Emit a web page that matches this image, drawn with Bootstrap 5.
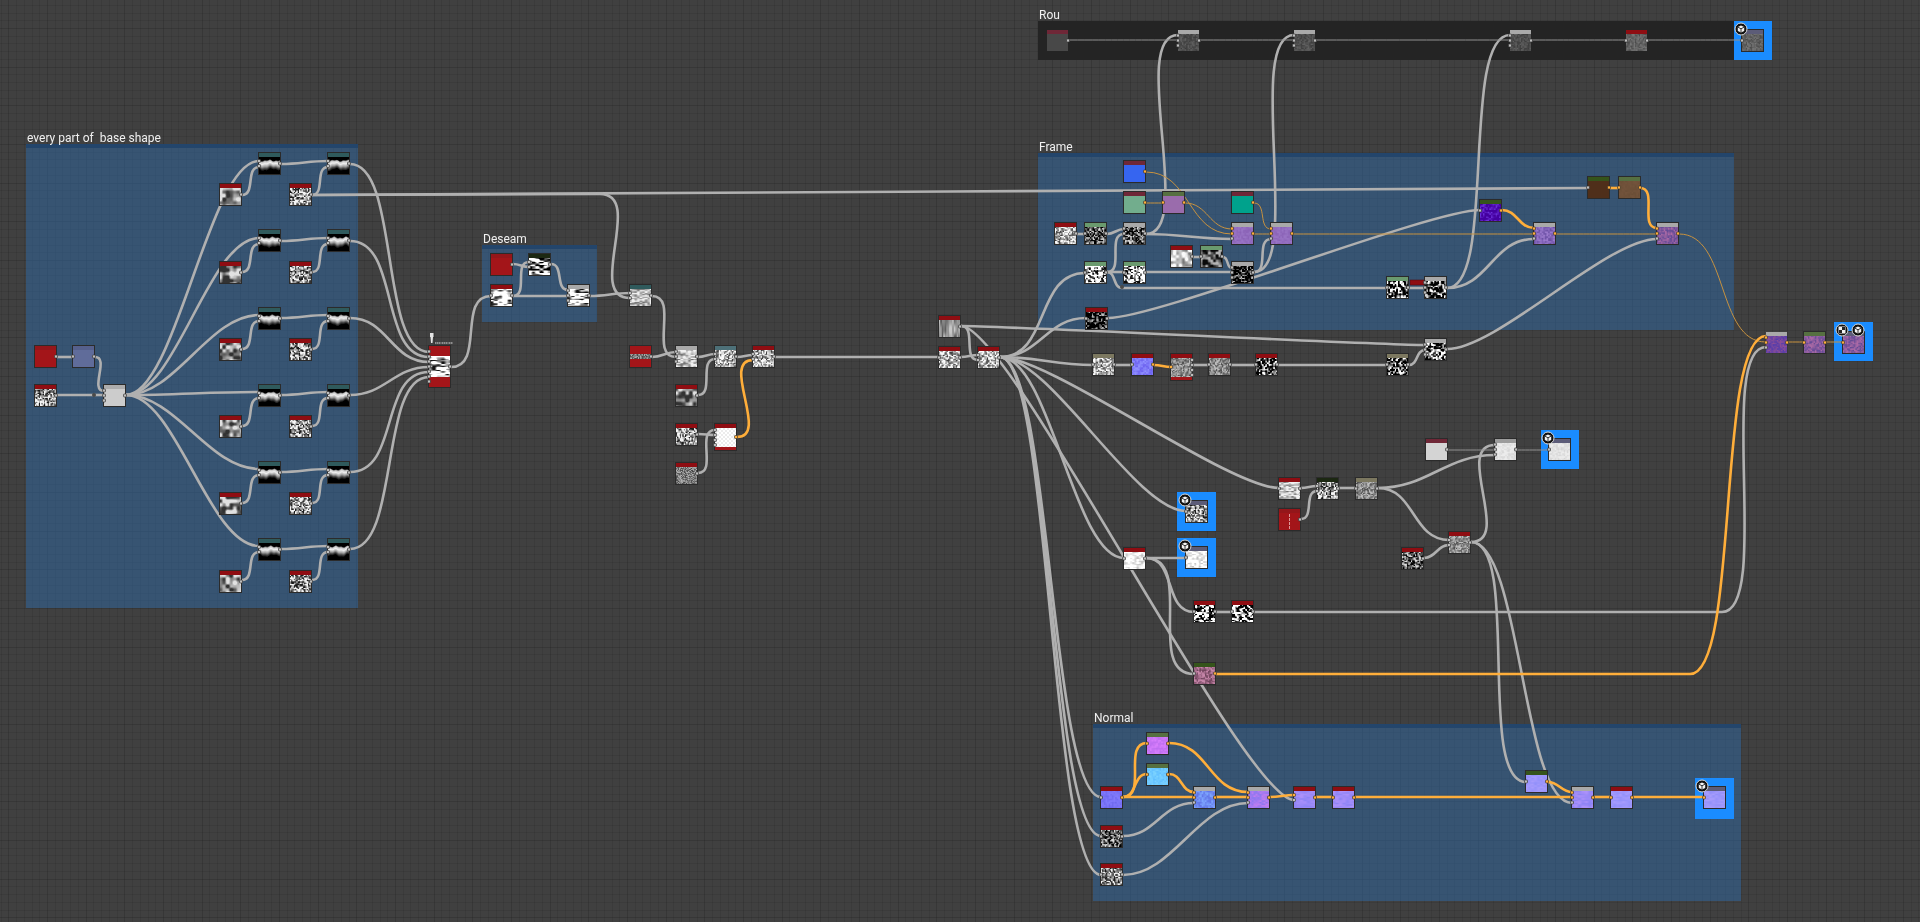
<!DOCTYPE html>
<html lang="en">
<head>
<meta charset="utf-8">
<meta name="viewport" content="width=device-width, initial-scale=1">
<title>Material graph</title>
<link href="https://cdn.jsdelivr.net/npm/bootstrap@5.3.0/dist/css/bootstrap.min.css" rel="stylesheet">
<style>
  body { background: #404040; font-family: Roboto, "Noto Sans", sans-serif; }
  .graph-layer { top: 0; left: 0; pointer-events: none; }
  .graph-frame { background: rgba(47, 100, 155, .55); border-top: 4px solid #23456b; background-clip: padding-box; }
  .graph-frame.dark { background: #242424; border-top: 0; }
  .frame-title { color: #f0f0f0; font-size: 12px; line-height: 16px; white-space: pre; }
  .output-halo { background: #1a8cff; }
  .graph-node { background: #2b2b2b; padding: 1px; }
  .graph-node.plain { background: transparent; }
  .graph-node canvas { display: block; }
</style>
</head>
<body>
<main id="stage" class="position-relative overflow-hidden min-vh-100 w-100">
  <canvas id="grid" class="position-absolute graph-layer"></canvas>
  <div id="frames"></div>
  <svg id="wires" class="position-absolute graph-layer w-100 h-100" fill="none" aria-hidden="true"></svg>
  <div id="nodes"></div>
  <svg id="overlay" class="position-absolute graph-layer w-100 h-100" aria-hidden="true">
    <defs>
      <g id="view3d">
        <circle r="6" fill="#111" stroke="#d8d8d8" stroke-width="1"/>
        <path d="M0-3.600 3.200-1.900V1.900L0 3.600-3.200 1.900V-1.900Z" fill="#f2f2f2"/>
        <path d="M-3.200-1.900 0-.2 3.200-1.900M0-.2V3.600" stroke="#222" stroke-width=".9" fill="none"/>
      </g>
      <g id="view2d">
        <circle r="6" fill="#111" stroke="#d8d8d8" stroke-width="1"/>
        <path d="M-3.500-3.500H3.500V3.500H-3.500Z" fill="#f2f2f2"/>
        <path d="M0-3H3V0H0ZM-3 0H0V3H-3Z" fill="#222"/>
      </g>
    </defs>
  </svg>
</main>
<script src="https://cdn.jsdelivr.net/npm/bootstrap@5.3.0/dist/js/bootstrap.bundle.min.js"></script>
<script>
const SVG = 'http://www.w3.org/2000/svg';
const $ = id => document.getElementById(id);
const RED = '#8f0d12', MAR = '#6f2737', GRY = '#a9a9a9', TEAL = '#2f5a5c', GRN = '#6a9a6e', OLV = '#567041',
      DGR = '#35541b', KHA = '#7c7860', SLT = '#5c5c78', BLG = '#4d7078', BLK = '#1c2812';

/* frames: x, y, width, height, title, dark */
const frames = [
  [26, 144, 332, 464, 'every part of  base shape'],
  [482, 245, 115, 77, 'Deseam'],
  [1038, 153, 696, 177, 'Frame'],
  [1038, 21, 696, 39, 'Rou', true],
  [1093, 724, 648, 177, 'Normal']
];
const halos = [[1734,21,38,39],[1177,492,39,39],[1177,538,39,39],[1541,430,38,39],[1695,778,39,41],[1834,322,39,39]];

/* textures: cell width, cell height, low colour, high colour, contrast, bias */
const K = [0,0,0], W = [255,255,255];
const T = {
  blob: [3.6,3.6,[50,50,50],[225,225,225],1.7,.05], grain: [1.3,1.3,[25,25,25],[245,245,245],1.5,.05],
  fine: [1,1,[70,70,70],[180,180,180],1,0], noise: [1.3,1.3,[60,60,60],[250,250,250],1.4,.12],
  soft: [2.6,1.3,[110,110,110],[240,240,240],1.4,.15], streak: [4.5,1.4,[20,20,20],W,2,.32],
  streak2: [4,1.4,K,W,2.2,.05], vstreak: [1.5,9,[80,80,80],[200,200,200],1.2,.05],
  hot: [1.5,1.5,[10,10,10],W,2.6,.25], bw: [1.7,1.5,K,W,3.2,.05], bwd: [1.6,1.6,K,W,2.2,-.18],
  dark: [1.3,1.3,K,[220,220,220],1.5,-.08], darks: [1.5,1.5,K,[210,210,210],1.9,-.38],
  grey: [1.2,1.2,[80,80,80],[190,190,190],1.3,.05], cloud: [3,3,[120,120,120],[250,250,250],1.5,.15],
  cloudd: [2.6,2.6,[10,10,10],[180,180,180],1.6,-.05], rough: [1.4,1.4,[58,58,58],[98,98,98],1,0],
  rough2: [1.3,1.3,[75,75,75],[120,120,120],1.1,0], pale: [1.5,1.5,[212,212,212],[236,236,236],1.2,.1],
  pale2: [2.2,1.5,[190,190,190],W,1.5,.25], blue: [1.6,1.6,[110,100,240],[145,145,255],1.3,0],
  vio: [1.6,1.6,[108,80,165],[155,122,205],1.2,0], vio2: [1.4,1.4,[100,75,150],[170,105,165],1.3,0],
  vio3: [1.4,1.4,[85,60,170],[140,78,150],1.3,0], vioflat: [1.6,1.6,[138,98,182],[154,118,198],1,0],
  indigo: [1.6,1.6,[68,0,160],[110,50,220],1.5,-.2], brown: [1.6,1.6,[106,78,54],[116,84,60],1,0],
  mauve: [1.4,1.4,[115,70,95],[200,135,170],1.4,0], mag: [1.6,1.6,[190,110,240],[215,125,252],1.2,0],
  sky: [1.6,1.6,[95,190,255],[125,212,255],1.2,0], bluen: [1.6,1.6,[98,118,232],[125,165,255],1.3,0],
  pinkn: [2,1.6,[145,120,240],[192,125,240],1.3,0], lav: [3.5,1.5,[142,132,245],[172,145,250],1.2,0],
  lav2: [3,1.5,[146,144,250],[168,156,252],1.1,0], norm: [1.6,1.6,[110,105,238],[130,122,252],1.2,0]
};

/* nodes: x, y, header colour, texture or flat colour, options */
const nodes = [];
const add = (x, y, head, tex, o = {}) => nodes.push({x, y, head, tex, ...o});
[152,229,307,384,461,538].forEach(y => {
  add(258, y, TEAL, 'mtn', {i: [-2.5,2.5], o: [0]});
  add(327, y, TEAL, 'mtn', {i: [-2.5,2.5], o: [0]});
});
[183,261,338,415,492,570].forEach(y => { add(219, y, RED, 'blob', {o: [0]}); add(289, y, RED, 'grain', {o: [0]}); });
add(34,345,'#94161a','#a31519',{o:[0]}); add(72,345,'#56608c','#606c9a',{i:[0],o:[0]});
add(34,384,RED,'grain',{o:[0]}); add(103,384,'#adadad','#cccccc',{i:[-5,0,5],o:[0]});
add(428,345,'#a31519','streak',{h:43,head_h:10,foot:10,i:[-15,-10,-5,0,5,10,15],o:[0]});
add(490,253,'#94161a','#a31519',{o:[0]}); add(528,253,BLK,'streak2',{i:[-2.5,2.5],o:[0]});
add(490,284,RED,'streak',{i:[0],o:[0]}); add(567,284,GRY,'streak',{i:[-5,0,5],o:[0]});
add(629,284,TEAL,'soft',{i:[-2.5,2.5],o:[0]});
add(629,345,'#a31519','fine',{head_h:8,foot:8,o:[0]}); add(675,345,GRY,'soft',{i:[-5,0,5],o:[0]});
add(714,345,BLG,'noise',{i:[-2.5,2.5],o:[0]}); add(752,345,RED,'noise',{i:[-2.5,2.5],o:[0]});
add(675,384,RED,'blob',{o:[0]}); add(675,423,RED,'grain',{o:[0]}); add(675,462,RED,'fine',{o:[0]});
add(714,423,RED,'check',{h:28,foot:3,i:[-7,-2,3,8],oo:[0]});
add(938,315,RED,'vstreak',{o:[0]}); add(938,346,RED,'noise',{i:[0],o:[0]}); add(977,346,RED,'noise',{i:[-2.5,2.5],o:[0]});
add(1085,307,RED,'darks',{i:[0],o:[0]}); add(1092,353,KHA,'noise',{i:[0],o:[0]});
add(1131,353,RED,'blue',{i:[0],oo:[0]}); add(1170,353,RED,'grey',{h:28,foot:3,io:[0],o:[-7,-2,3,8]});
add(1208,353,RED,'grey',{i:[0],o:[0]}); add(1255,353,RED,'bwd',{i:[0],o:[0]}); add(1386,353,KHA,'bwd',{i:[0],o:[0]});
add(1424,338,GRY,'bwd',{i:[-5,0,5],o:[0]});
add(1123,160,MAR,'#3665f0',{oo:[0]}); add(1123,191,MAR,'#72ad8d',{oo:[0]});
add(1162,191,OLV,'#9a6cac',{io:[0],oo:[0]}); add(1231,191,MAR,'#00a28c',{oo:[0]});
add(1054,222,RED,'noise',{o:[0]}); add(1084,222,GRN,'dark',{i:[0],o:[0]}); add(1123,222,GRY,'dark',{i:[-5,0,5],o:[0]});
add(1231,222,GRY,'vioflat',{io:[-5,0],i:[5],oo:[0]}); add(1270,222,GRY,'vioflat',{io:[-5,0],i:[5],oo:[0]});
add(1170,245,RED,'cloud',{o:[0]}); add(1200,245,GRN,'cloudd',{i:[0],o:[0]}); add(1231,261,GRY,'darks',{i:[-5,0,5],o:[0]});
add(1084,261,GRN,'hot',{i:[0],o:[0]}); add(1123,261,GRN,'hot',{i:[0],o:[0]});
add(1386,276,GRN,'bwd',{i:[0],o:[0]}); add(1424,276,GRY,'bwd',{i:[-5,0,5],o:[0]});
add(1587,176,DGR,'#4f2f1a',{i:[0],oo:[0]}); add(1618,176,OLV,'brown',{io:[0],oo:[0]});
add(1479,199,DGR,'indigo',{i:[0],oo:[0]});
add(1533,222,GRY,'vio',{io:[-5,0],i:[5],oo:[0]}); add(1656,222,GRY,'vio2',{io:[-5,0],i:[5],oo:[0]});
add(1046,29,MAR,'#484848',{plain:1,o:[0]}); add(1177,29,GRY,'rough',{plain:1,i:[-5,0,5],o:[0]});
add(1293,29,GRY,'rough',{plain:1,i:[-5,0,5],o:[0]}); add(1509,29,GRY,'rough',{plain:1,i:[-5,0,5],o:[0]});
add(1625,29,RED,'rough2',{plain:1,i:[0],o:[0]}); add(1741,29,SLT,'rough2',{i:[0]});
add(1185,500,SLT,'grain',{i:[0]}); add(1185,546,SLT,'pale2',{i:[0]});
add(1123,547,RED,'pale2',{i:[0],o:[0]});
add(1278,477,RED,'soft',{i:[0],o:[0]}); add(1316,477,BLK,'grain',{i:[-2.5,2.5],o:[0]}); add(1355,477,KHA,'grey',{i:[0],o:[0]});
add(1278,508,'#94161a','#a31519',{o:[0],dash:1}); add(1401,547,RED,'dark',{o:[0]}); add(1448,531,RED,'grey',{i:[-2.5,2.5],o:[0]});
add(1425,438,MAR,'#d4d4d4',{o:[0]}); add(1494,438,'#9c9c9c','pale',{i:[-5,0,5],o:[0]}); add(1548,438,SLT,'pale',{i:[0]});
add(1193,600,RED,'bw',{i:[0],o:[0]}); add(1231,600,RED,'bw',{i:[0],o:[0]}); add(1193,662,DGR,'mauve',{i:[0],oo:[0]});
add(1100,786,RED,'norm',{i:[0],oo:[0]}); add(1146,732,OLV,'mag',{io:[0],oo:[0]}); add(1146,763,OLV,'sky',{io:[0],oo:[0]});
add(1193,786,GRY,'bluen',{io:[-5,0],i:[5],oo:[0]}); add(1247,786,GRY,'pinkn',{io:[-5,0],i:[5],oo:[0]});
add(1293,786,RED,'lav',{io:[-2.5],i:[2.5],oo:[0]}); add(1332,786,RED,'lav',{io:[0],oo:[0]});
add(1100,825,RED,'dark',{i:[0],o:[0]}); add(1100,863,RED,'grain',{i:[0],o:[0]});
add(1525,770,DGR,'lav2',{i:[0],oo:[0]}); add(1571,786,GRY,'lav',{io:[-5,0],i:[5],oo:[0]});
add(1610,786,RED,'lav2',{io:[0],oo:[0]}); add(1703,786,SLT,'lav2',{io:[0]});
add(1765,331,GRY,'vio3',{plain:1,io:[-5,0],i:[5],oo:[0]}); add(1803,331,OLV,'vio2',{io:[0],oo:[0]}); add(1842,331,SLT,'vio2',{io:[0]});

/* wires: x1, y1, x2, y2 */
const grey = [
  [57,357,73,357],[95,357,104,391],[57,395,94,395],[94,395,104,395],
  [312,195,1588,188],[312,195,600,194],[600,194,630,298],
  [451,367,491,296],[513,264,529,267],[513,296,529,262],[513,296,568,296],[551,264,568,290],[590,296,630,293],
  [652,296,676,357],[652,357,676,352],[698,357,715,354],[698,395,715,359],[698,434,715,435],[698,473,715,430],
  [737,357,753,355],[775,357,939,357],[961,357,978,355],[961,326,978,360],[961,326,1425,345],
  [1000,357,1085,273],[1000,357,1086,318],[1000,357,1093,365],[1000,357,1279,488],[1000,357,1186,511],[1000,357,1124,558],
  [1000,357,1101,797],[1000,357,1101,836],[1000,357,1101,875],[961,326,1294,800],
  [1115,365,1132,365],[1193,365,1209,365],[1231,365,1256,365],[1278,365,1387,365],[1409,365,1425,350],[1447,349,1657,239],
  [1077,234,1085,234],[1107,234,1124,229],[1107,272,1124,234],[1107,272,1124,272],[1107,272,1122,288],[1122,288,1387,288],
  [1146,234,1232,239],[1146,234,1178,35],[1146,272,1232,272],[1193,257,1201,257],[1223,257,1232,268],
  [1254,272,1271,239],[1254,272,1294,35],[1108,318,1480,210],[1409,288,1425,288],[1447,288,1534,239],[1447,288,1510,35],
  [1146,558,1186,558],[1146,558,1194,612],[1146,558,1194,674],[1216,612,1232,612],[1254,612,1722,612],[1722,612,1766,347],
  [1301,488,1317,486],[1301,519,1317,491],[1339,488,1356,488],[1378,488,1495,455],[1378,488,1449,540],[1424,558,1449,545],
  [1471,542,1495,445],[1471,542,1526,782],[1471,542,1572,803],[1123,836,1194,803],[1123,875,1248,803]
];
[164,241,318,395,472,549].forEach((y, k) => {
  grey.push([126,395,259,y-3],[281,y,328,y-3],[242,y+31,259,y+3],[350,y,429,352+k*5]);
  grey.push([312,y+31,328,y+3]);
});
const greyThin = [[1069,40,1178,40],[1200,40,1294,40],[1316,40,1510,40],[1532,40,1626,40],[1648,40,1742,40],[1447,450,1495,450],[1517,450,1549,450]];
const gold = [[737,437,753,360],[1154,365,1171,367],[1610,188,1619,188],[1640,188,1657,228],[1502,210,1534,228],
  [1216,674,1690,674],[1690,674,1766,336],[1123,797,1147,743],[1123,797,1147,774],[1123,797,1194,797],[1169,774,1194,792],
  [1169,743,1248,792],[1216,797,1248,797],[1270,797,1294,795],[1316,797,1333,797],[1355,797,1572,797],[1548,782,1572,792],
  [1594,797,1611,797],[1633,797,1704,797]];
const goldThin = [[1146,172,1232,234],[1146,203,1163,203],[1185,203,1232,229],[1254,203,1271,229],[1254,234,1271,234],
  [1293,234,1534,234],[1556,234,1657,234],[1679,234,1766,342],[1788,342,1804,342],[1826,342,1843,342]];

const el = (parent, name, attrs) => {
  const e = document.createElementNS(SVG, name);
  for (const k in attrs) e.setAttribute(k, attrs[k]);
  parent.appendChild(e);
  return e;
};
const box = (parent, tag, cls, x, y, w, h) => {
  const e = document.createElement(tag);
  e.className = cls;
  e.style.cssText = `left:${x}px;top:${y}px;` + (w ? `width:${w}px;` : '') + (h ? `height:${h}px` : '');
  parent.appendChild(e);
  return e;
};
const wire = ([x1, y1, x2, y2], colour, width) => {
  const c = Math.min(50, .42 * Math.hypot(x2 - x1, y2 - y1));
  el($('wires'), 'path', {d: `M${x1} ${y1}C${x1+c} ${y1} ${x2-c} ${y2} ${x2} ${y2}`, stroke: colour, 'stroke-width': width});
};

let seed = 7;
const rnd = () => (seed = (seed * 16807) % 2147483647) / 2147483647;
function paint(g, w, h, n) {
  const top = n.head_h || 4, foot = n.foot || 0;
  g.fillStyle = n.head; g.fillRect(0, 0, w, h);
  if (foot) { g.fillStyle = '#a31519'; g.fillRect(0, h - foot, w, foot); }
  const th = h - top - foot;
  if (n.tex[0] === '#') {
    g.fillStyle = n.tex; g.fillRect(0, top, w, th);
    if (n.dash) { g.fillStyle = '#d99'; for (let y = 5; y < h; y += 4) g.fillRect(10, y, 1, 3); }
    return;
  }
  if (n.tex === 'check') {
    for (let y = 0; y < th; y++) for (let x = 0; x < w; x++) {
      g.fillStyle = ((x >> 1) + (y >> 1)) % 2 ? '#fff' : '#ececec'; g.fillRect(x, top + y, 1, 1);
    }
    return;
  }
  if (n.tex === 'mtn') {
    g.fillStyle = '#000'; g.fillRect(0, top, w, th);
    const a = rnd() * 6, b = rnd() * 6;
    for (let x = 0; x < w; x++) {
      const edge = top + 4 + Math.sin(x * .5 + a) * .6 + Math.sin(x * 1.1 + b) * .4;
      const deep = 9 + Math.sin(x * .4 + b);
      const gr = g.createLinearGradient(0, edge - 1, 0, edge + deep);
      gr.addColorStop(0, '#000'); gr.addColorStop(.15, '#c8c8c8'); gr.addColorStop(.35, '#eeeeee');
      gr.addColorStop(.6, '#a0a0a0'); gr.addColorStop(.8, '#444'); gr.addColorStop(1, '#000');
      g.fillStyle = gr; g.fillRect(x, Math.floor(edge - 1), 1, 11);
    }
    return;
  }
  const [sx, sy, lo, hi, con, bias] = T[n.tex];
  const cols = Math.ceil(w / sx) + 2, rows = Math.ceil(th / sy) + 2;
  const v = Array.from({length: cols * rows}, rnd);
  const s = t => t * t * (3 - 2 * t);
  for (let y = 0; y < th; y++) for (let x = 0; x < w; x++) {
    const fx = x / sx, fy = y / sy, ix = fx | 0, iy = fy | 0, u = s(fx - ix), q = s(fy - iy), p = iy * cols + ix;
    let m = (v[p] * (1-u) + v[p+1] * u) * (1-q) + (v[p+cols] * (1-u) + v[p+cols+1] * u) * q;
    m = Math.max(0, Math.min(1, (m - .5) * con + .5 + bias));
    g.fillStyle = `rgb(${lo.map((c, k) => Math.round(c + (hi[k] - c) * m)).join()})`;
    g.fillRect(x, top + y, 1, 1);
  }
}

/* background grid, ruled again whenever the window changes size */
function drawGrid() {
  const c = $('grid'), w = c.width = $('stage').clientWidth, h = c.height = $('stage').clientHeight, g = c.getContext('2d');
  const step = 116 / 15;
  const rule = (start, size, put) => {
    for (let k = -Math.floor(start / step); start + k * step < size; k++) {
      g.fillStyle = k % 5 ? 'rgba(0,0,0,.08)' : 'rgba(0,0,0,.13)';
      put(Math.round(start + k * step));
    }
  };
  rule(1555, w, x => g.fillRect(x, 0, 1, h));
  rule(724, h, y => g.fillRect(0, y, w, 1));
}
drawGrid();
addEventListener('resize', drawGrid);

frames.forEach(([x, y, w, h, title, dark]) => {
  box($('frames'), 'section', 'graph-frame position-absolute' + (dark ? ' dark' : ''), x, y, w, h);
  box($('frames'), 'h2', 'frame-title position-absolute m-0 fw-normal', x + 1, y - 14).textContent = title;
});
halos.forEach(a => box($('frames'), 'div', 'output-halo position-absolute', ...a));

grey.forEach(a => wire(a, '#b0b0b0', 2.6));
greyThin.forEach(a => wire(a, '#909090', 1));
goldThin.forEach(a => wire(a, '#c8923f', 1));
gold.forEach(a => wire(a, '#ffae3a', 2.6));
el($('wires'), 'rect', {x: 1410, y: 280, width: 15, height: 5, fill: RED, stroke: '#501015', 'stroke-width': .6});
[[94,395],[1122,287]].forEach(([cx, cy]) => el($('wires'), 'circle', {cx, cy, r: 2, fill: '#4a4a4a'}));

nodes.forEach(n => {
  const h = n.h || 23;
  const d = box($('nodes'), 'div', 'graph-node position-absolute' + (n.plain ? ' plain' : ''), n.x, n.y, 23, h);
  const c = document.createElement('canvas');
  c.width = 21; c.height = h - 2;
  d.appendChild(c);
  paint(c.getContext('2d'), 21, h - 2, n);
  const cy = n.y + h / 2;
  const port = (x, off, fill) => el($('overlay'), 'rect', {x: x - 1.5, y: cy + off - 1.5, width: 3, height: 3, rx: .8, fill, stroke: '#333', 'stroke-width': .7});
  (n.i || []).forEach(o => port(n.x + 1, o, '#bdbdbd'));
  (n.io || []).forEach(o => port(n.x + 1, o, '#ffae3a'));
  (n.o || []).forEach(o => port(n.x + 22, o, '#bdbdbd'));
  (n.oo || []).forEach(o => port(n.x + 22, o, '#ffae3a'));
});

[[1741,29],[1185,500],[1185,546],[1548,438],[1702,786],[1858,330]].forEach(([x, y]) =>
  el($('overlay'), 'use', {href: '#view3d', x, y}));
el($('overlay'), 'use', {href: '#view2d', x: 1842, y: 330});

/* pin and its shrunken caption above the tall node */
el($('overlay'), 'path', {d: 'M430 333H433.500V337H433L432.500 343H431L430.500 337H430Z', fill: '#e4e4e4'});
el($('overlay'), 'path', {d: 'M435 343H453', stroke: '#a8a8a8', 'stroke-width': 1.5, 'stroke-dasharray': '1.500 .5 1 .5'});
</script>
</body>
</html>
